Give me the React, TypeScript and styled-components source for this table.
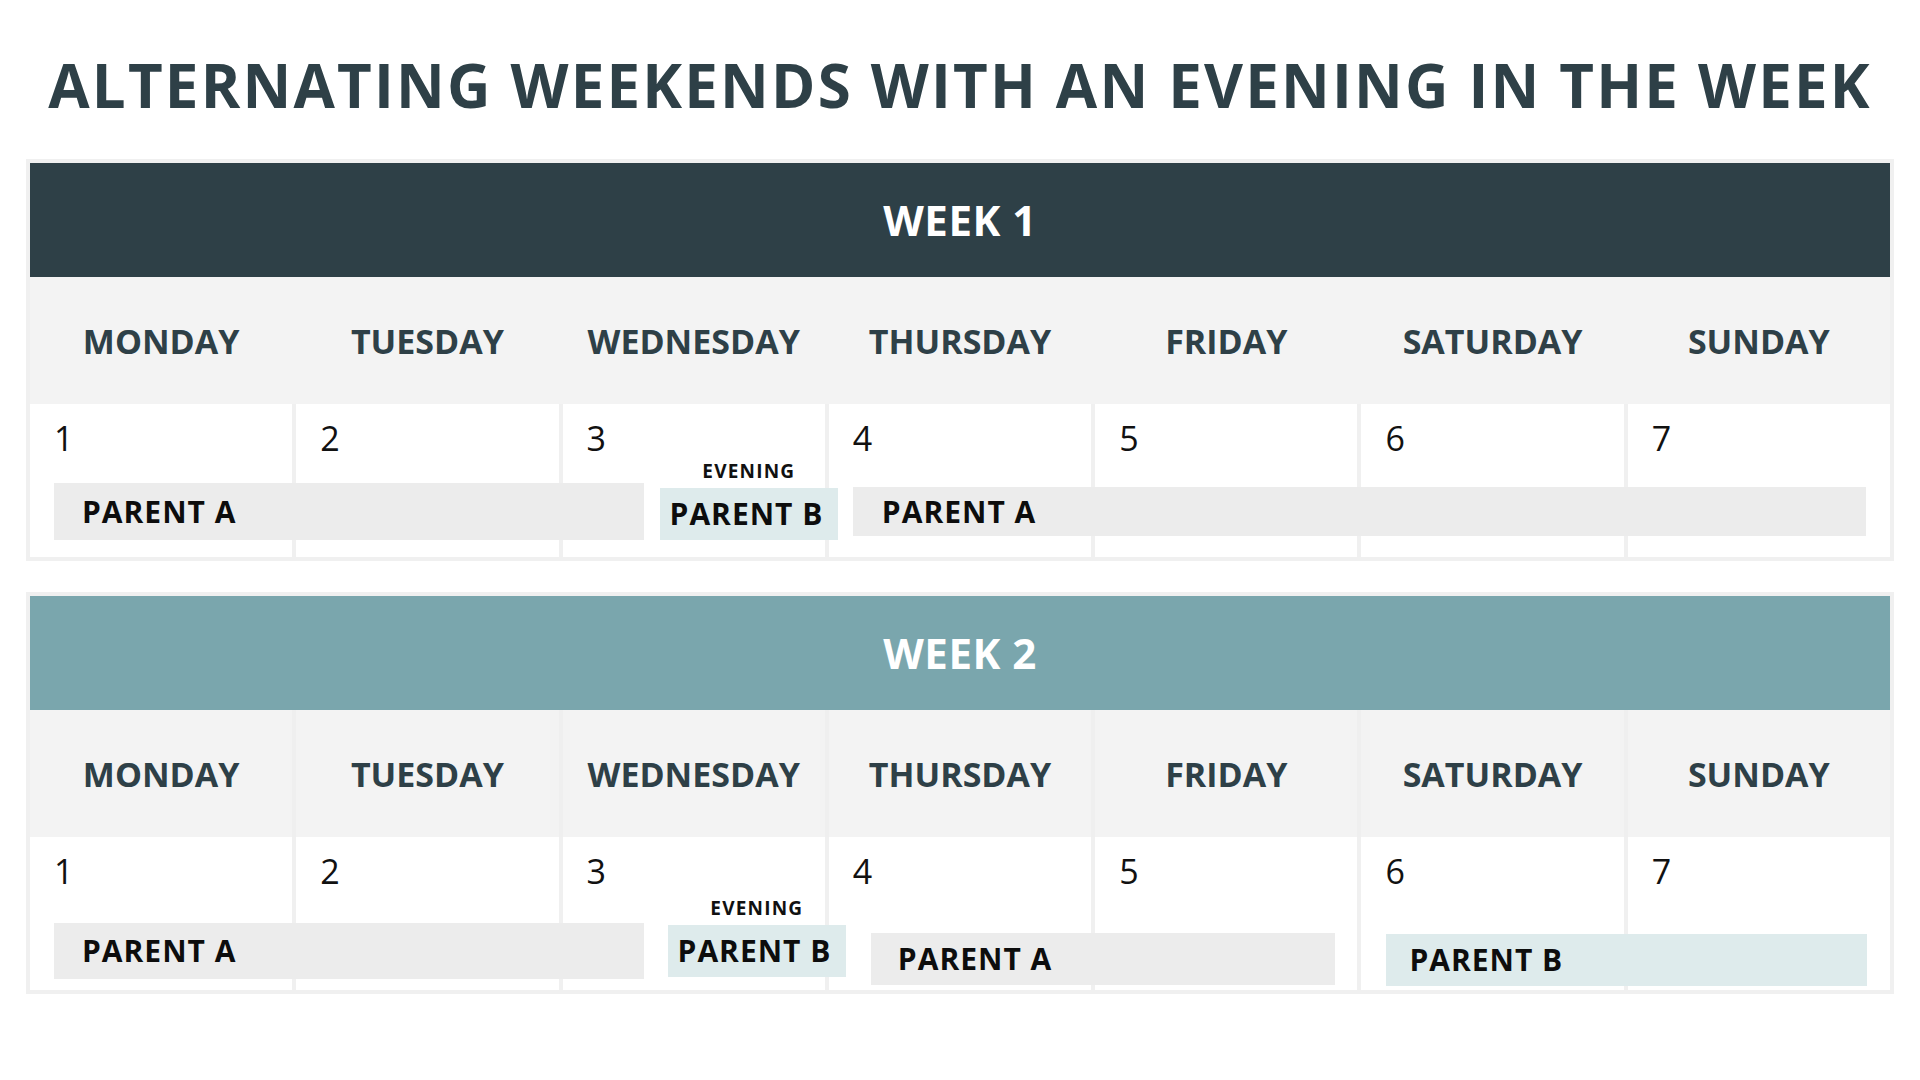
import styled, { createGlobalStyle } from "styled-components";

type Tone = "a" | "b";

type Span = {
  label: string;
  tone: Tone;
  from: number;
  to: number;
  top: number;
  left: number;
  right: number;
  height: number;
  pad: number;
  evening?: boolean;
};

type Week = {
  title: string;
  color: string;
  divided: boolean;
  spans: Span[];
};

const DAYS = ["MONDAY", "TUESDAY", "WEDNESDAY", "THURSDAY", "FRIDAY", "SATURDAY", "SUNDAY"];

const WEEKS: Week[] = [
  {
    title: "WEEK 1",
    color: "#2e4047",
    divided: false,
    spans: [
      { label: "PARENT A", tone: "a", from: 1, to: 4, top: 79, left: 24, right: 181, height: 57, pad: 28 },
      { label: "PARENT B", tone: "b", from: 3, to: 5, top: 58, left: 97, right: 253, height: 52, pad: 10, evening: true },
      { label: "PARENT A", tone: "a", from: 4, to: 8, top: 83, left: 24, right: 24, height: 49, pad: 29 },
    ],
  },
  {
    title: "WEEK 2",
    color: "#7aa6ad",
    divided: true,
    spans: [
      { label: "PARENT A", tone: "a", from: 1, to: 4, top: 86, left: 24, right: 181, height: 56, pad: 28 },
      { label: "PARENT B", tone: "b", from: 3, to: 5, top: 62, left: 105, right: 245, height: 52, pad: 10, evening: true },
      { label: "PARENT A", tone: "a", from: 4, to: 6, top: 96, left: 42, right: 22, height: 52, pad: 27 },
      { label: "PARENT B", tone: "b", from: 6, to: 8, top: 97, left: 25, right: 23, height: 52, pad: 23 },
    ],
  },
];

const GlobalStyle = createGlobalStyle`
  html, body {
    margin: 0;
    padding: 0;
    background: #ffffff;
  }
  body {
    font-family: "Open Sans", "Liberation Sans", sans-serif;
  }
`;

const Page = styled.main`
  width: 1920px;
  height: 1080px;
  box-sizing: border-box;
  padding: 55px 26px 0;
  display: flex;
  flex-direction: column;
`;

const Title = styled.h1`
  margin: 0 0 44px;
  text-align: center;
  font: 700 60px/1 "Open Sans", sans-serif;
  letter-spacing: 2.2px;
  color: #2e4047;
  white-space: nowrap;
`;

const Weeks = styled.div`
  display: flex;
  flex-direction: column;
  gap: 31px;
`;

const Table = styled.section`
  background: #f0f0f0;
  padding: 4px;
  display: flex;
  flex-direction: column;
`;

const WeekHeader = styled.div<{ $bg: string }>`
  height: 114px;
  background: ${p => p.$bg};
  color: #ffffff;
  display: flex;
  align-items: center;
  justify-content: center;
  font: 700 42px/1 "Open Sans", sans-serif;
  letter-spacing: 0.5px;
`;

const DayRow = styled.div<{ $divided: boolean }>`
  height: 127px;
  display: grid;
  grid-template-columns: repeat(7, 1fr);
  column-gap: 4px;
  background: ${p => (p.$divided ? "#efefef" : "#f3f3f3")};
`;

const DayName = styled.div`
  background: #f3f3f3;
  display: flex;
  align-items: center;
  justify-content: center;
  font: 700 34px/1 "Open Sans", sans-serif;
  color: #2e4047;
`;

const CellGrid = styled.div`
  display: grid;
  grid-template-columns: repeat(7, 1fr);
  grid-template-rows: 153px;
  column-gap: 4px;
`;

const DayCell = styled.div<{ $col: number }>`
  grid-row: 1;
  grid-column: ${p => p.$col};
  background: #ffffff;
  padding: 17px 24px 0;
  font: 400 34px/1 "Open Sans", sans-serif;
  color: #111111;
`;

const Slot = styled.div<{ $from: number; $to: number; $top: number; $left: number; $right: number }>`
  grid-row: 1;
  grid-column: ${p => p.$from} / ${p => p.$to};
  align-self: start;
  margin: ${p => p.$top}px ${p => p.$right}px 0 ${p => p.$left}px;
  display: flex;
  flex-direction: column;
  align-items: center;
  z-index: 1;
`;

const EveningLabel = styled.span`
  margin-bottom: 7px;
  font: 700 19px/1 "Open Sans", sans-serif;
  letter-spacing: 1.2px;
  color: #111111;
`;

const Bar = styled.div<{ $tone: Tone; $height: number; $pad: number }>`
  align-self: stretch;
  height: ${p => p.$height}px;
  box-sizing: border-box;
  padding-left: ${p => p.$pad}px;
  display: flex;
  align-items: center;
  background: ${p => (p.$tone === "a" ? "#ececec" : "#deebec")};
  font: 700 30px/1 "Open Sans", sans-serif;
  letter-spacing: 1px;
  color: #0d0d0d;
  white-space: nowrap;
`;

const WeekBlock = ({ week }: { week: Week }) => (
  <Table>
    <WeekHeader $bg={week.color}>{week.title}</WeekHeader>
    <DayRow $divided={week.divided}>
      {DAYS.map(d => (
        <DayName key={d}>{d}</DayName>
      ))}
    </DayRow>
    <CellGrid>
      {DAYS.map((d, i) => (
        <DayCell key={d} $col={i + 1}>
          {i + 1}
        </DayCell>
      ))}
      {week.spans.map((s, i) => (
        <Slot key={i} $from={s.from} $to={s.to} $top={s.top} $left={s.left} $right={s.right}>
          {s.evening && <EveningLabel>EVENING</EveningLabel>}
          <Bar $tone={s.tone} $height={s.height} $pad={s.pad}>
            {s.label}
          </Bar>
        </Slot>
      ))}
    </CellGrid>
  </Table>
);

export default function App() {
  return (
    <>
      <GlobalStyle />
      <Page>
        <Title>ALTERNATING WEEKENDS WITH AN EVENING IN THE WEEK</Title>
        <Weeks>
          {WEEKS.map(w => (
            <WeekBlock key={w.title} week={w} />
          ))}
        </Weeks>
      </Page>
    </>
  );
}
